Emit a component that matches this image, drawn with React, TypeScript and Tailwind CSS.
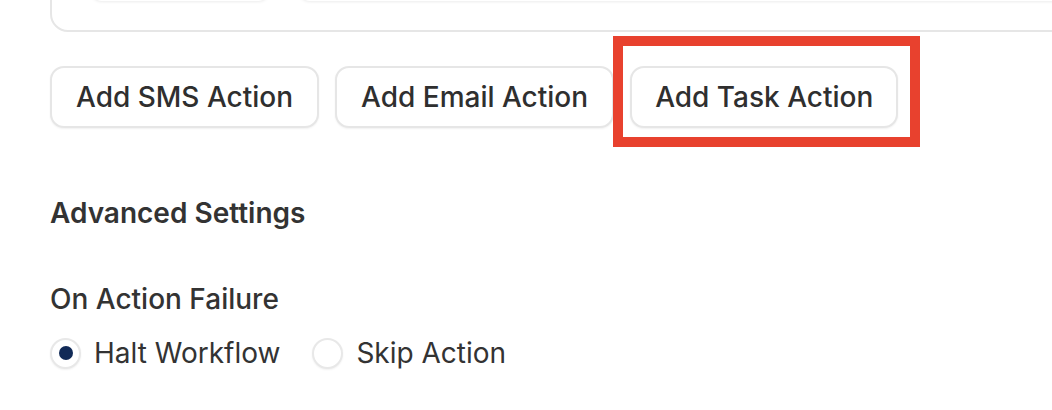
import React from "react";

function Btn({ label, highlight, pad }: { label: string; highlight?: boolean; pad: string }) {
  return (
    <div className="relative">
      <button
        className={
          "h-[62px] rounded-[14px] border-2 border-[#e6e6e6] bg-white text-[28px] font-medium text-[#2f2f2f] shadow-[0_1px_2px_rgba(0,0,0,0.06)] " +
          pad
        }
      >
        {label}
      </button>
      {highlight && (
        <div className="pointer-events-none absolute left-[-17px] top-[-30px] h-[111px] w-[307px] border-[10px] border-[#e8412e]" />
      )}
    </div>
  );
}

function Radio({ label, checked }: { label: string; checked?: boolean }) {
  return (
    <label className="flex items-center gap-[13px]">
      <span className="flex h-[31px] w-[31px] items-center justify-center rounded-full border-2 border-[#e8e8e8] bg-white shadow-[0_1px_2px_rgba(0,0,0,0.06)]">
        {checked && <span className="h-[14px] w-[14px] rounded-full bg-[#112a57]" />}
      </span>
      <span className="text-[28px] text-[#333333]">{label}</span>
    </label>
  );
}

export default function App() {
  return (
    <div
      className="h-[410px] w-[1052px] overflow-hidden bg-white pl-[50px]"
      style={{ fontFamily: "Inter, 'Noto Sans', sans-serif" }}
    >
      <div className="-mt-[48px] flex h-[80px] w-[1100px] gap-[28px] rounded-[18px] border-2 border-[#e6e6e6] pl-[38px]">
        <div className="h-[47px] w-[180px] rounded-[12px] bg-white shadow-[0_1px_3px_rgba(0,0,0,0.08)]" />
        <div className="h-[47px] flex-1 rounded-[12px] bg-white shadow-[0_1px_3px_rgba(0,0,0,0.08)]" />
      </div>
      <div className="mt-[34px] flex gap-[16px]">
        <Btn label="Add SMS Action" pad="px-[24px]" />
        <Btn label="Add Email Action" pad="px-[24px]" />
        <Btn label="Add Task Action" pad="px-[23px]" highlight />
      </div>
      <div className="mt-[68px] text-[28px] font-semibold leading-[34px] text-[#333333]">
        Advanced Settings
      </div>
      <div className="mt-[52px] text-[28px] font-medium leading-[34px] text-[#333333]">
        On Action Failure
      </div>
      <div className="mt-[16px] flex gap-[32px]">
        <Radio label="Halt Workflow" checked />
        <Radio label="Skip Action" />
      </div>
    </div>
  );
}
